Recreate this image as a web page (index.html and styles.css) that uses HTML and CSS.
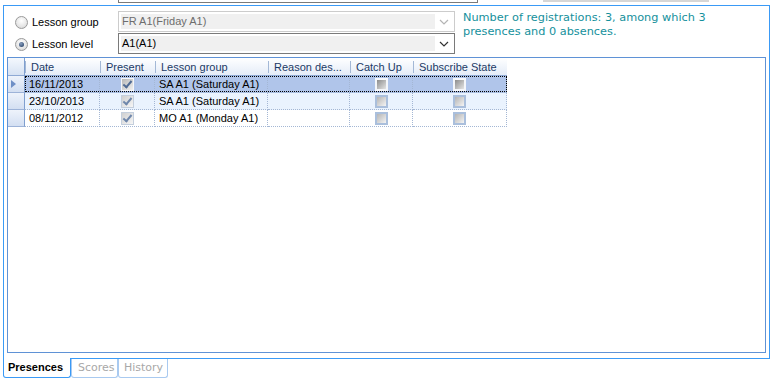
FILE: index.html
```html
<!DOCTYPE html>
<html>
<head>
<meta charset="utf-8">
<link rel="stylesheet" href="styles.css">
</head>
<body>
<div class="topstrip">
  <div class="stub-combo"></div>
  <div class="stub-bar"></div>
</div>
<div class="panel">
  <div class="filter">
    <label class="opt"><span class="radio"></span>Lesson group</label>
    <div class="combo disabled"><span class="field">FR A1(Friday A1)</span><span class="arrow"><svg width="10" height="6" viewBox="0 0 10 6"><path d="M1 1 L5 5 L9 1" fill="none" stroke="#b4b4b4" stroke-width="1.2"/></svg></span></div>
    <div class="info">Number of registrations: 3, among which 3<br>presences and 0 absences.</div>
    <label class="opt"><span class="radio on"></span>Lesson level</label>
    <div class="combo"><span class="field">A1(A1)</span><span class="arrow"><svg width="10" height="6" viewBox="0 0 10 6"><path d="M1 1 L5 5 L9 1" fill="none" stroke="#333" stroke-width="1.2"/></svg></span></div>
  </div>
  <div class="gridframe">
    <div class="grid">
      <div class="row head">
        <div class="rh"></div>
        <div class="hc c1">Date</div>
        <div class="hc c2">Present</div>
        <div class="hc c3">Lesson group</div>
        <div class="hc c4">Reason des...</div>
        <div class="hc c5">Catch Up</div>
        <div class="hc c6">Subscribe State</div>
      </div>
      <div class="row sel">
        <div class="rh"><svg width="5" height="8" viewBox="0 0 5 8"><path d="M0 0 L5 4 L0 8 Z" fill="#6e8fc6"/></svg></div>
        <div class="cells focus">
          <div class="c c1">16/11/2013</div>
          <div class="c c2 mid"><span class="chk on"></span></div>
          <div class="c c3">SA A1 (Saturday A1)</div>
          <div class="c c4"></div>
          <div class="c c5 mid"><span class="chk"></span></div>
          <div class="c c6 mid"><span class="chk"></span></div>
        </div>
      </div>
      <div class="row alt">
        <div class="rh"></div>
        <div class="cells">
          <div class="c c1">23/10/2013</div>
          <div class="c c2 mid"><span class="chk on"></span></div>
          <div class="c c3">SA A1 (Saturday A1)</div>
          <div class="c c4"></div>
          <div class="c c5 mid"><span class="chk"></span></div>
          <div class="c c6 mid"><span class="chk"></span></div>
        </div>
      </div>
      <div class="row">
        <div class="rh"></div>
        <div class="cells">
          <div class="c c1">08/11/2012</div>
          <div class="c c2 mid"><span class="chk on"></span></div>
          <div class="c c3">MO A1 (Monday A1)</div>
          <div class="c c4"></div>
          <div class="c c5 mid"><span class="chk"></span></div>
          <div class="c c6 mid"><span class="chk"></span></div>
        </div>
      </div>
    </div>
  </div>
</div>
<div class="tabs">
  <div class="tab active">Presences</div>
  <div class="tab">Scores</div>
  <div class="tab">History</div>
</div>
</body>
</html>
```
FILE: styles.css
```css
html, body {
  margin: 0;
  padding: 0;
  background: #fff;
  overflow: hidden;
}
body {
  width: 773px;
  height: 378px;
  font-family: "Liberation Sans", Arial, sans-serif;
  font-size: 11px;
  color: #000;
}
.topstrip {
  height: 5px;
  display: flex;
  align-items: flex-start;
}
.stub-combo {
  margin-left: 118px;
  width: 360px;
  height: 3px;
  box-sizing: border-box;
  border: 1px solid #7a7a7a;
  border-top: none;
}
.stub-bar {
  margin-left: 65px;
  width: 166px;
  height: 2px;
  background: #d6d6d6;
}
.panel {
  margin-left: 3px;
  width: 767px;
  height: 354px;
  box-sizing: border-box;
  border: 1px solid #3a9af6;
  display: flex;
  flex-direction: column;
  padding: 5px 0 0 0;
}
.filter {
  display: grid;
  grid-template-columns: 114px 337px auto;
  grid-template-rows: 21px 21px;
  row-gap: 1px;
}
.opt {
  display: flex;
  align-items: center;
  padding-left: 11px;
  gap: 4px;
  color: #000;
  padding-top: 1px;
}
.radio {
  width: 13px;
  height: 13px;
  box-sizing: border-box;
  border-radius: 50%;
  border: 1px solid #9a9a9a;
  background: radial-gradient(circle at 50% 35%, #ffffff 0%, #e6e6e6 60%, #cfcfcf 100%);
  position: relative;
}
.radio.on::after {
  content: "";
  position: absolute;
  left: 3px;
  top: 3px;
  width: 5px;
  height: 5px;
  border-radius: 50%;
  background: radial-gradient(circle at 40% 35%, #8aa0c0 0%, #3b5478 70%, #24385a 100%);
}
.combo {
  display: flex;
  box-sizing: border-box;
  border: 1px solid #7a7a7a;
  padding: 2px 1px 2px 2px;
  background: #fff;
}
.combo.disabled {
  border-color: #cccccc;
}
.combo .field {
  flex: 1;
  background: #f0f0f0;
  line-height: 15px;
  padding-left: 1px;
  color: #000;
}
.combo.disabled .field {
  color: #6d6d6d;
}
.combo .arrow {
  width: 18px;
  display: flex;
  align-items: center;
  justify-content: center;
}
.info {
  grid-column: 3;
  grid-row: 1 / 3;
  margin-left: 8px;
  font-family: "DejaVu Sans", Verdana, sans-serif;
  font-size: 11.3px;
  line-height: 14px;
  color: #14909c;
  padding-top: 0;
  white-space: nowrap;
}
.gridframe {
  margin: 3px 3px 5px 3px;
  flex: 1;
  border: 1px solid #5f92d6;
}
.grid {
  width: 499px;
}
.row {
  display: flex;
  height: 17px;
}
.row.head {
  height: 18px;
}
.rh {
  width: 17px;
  box-sizing: border-box;
  border-right: 1px solid #7f9fcf;
  border-bottom: 1px solid #9db3d8;
  background: linear-gradient(#eef3fb, #d3dff2);
  display: flex;
  align-items: center;
  padding-left: 3px;
}
.head .rh {
  background: linear-gradient(#f4f8fd, #d6e2f3);
  border-bottom: 1px solid #8ea9d4;
}
.hc {
  box-sizing: border-box;
  height: 18px;
  line-height: 18px;
  padding-left: 6px;
  color: #1b3a66;
  background: linear-gradient(#ffffff, #e4ecf8);
  border-bottom: 1px solid #8ea9d4;
  position: relative;
  white-space: nowrap;
  overflow: hidden;
}
.hc::before {
  content: "";
  position: absolute;
  left: 0;
  top: 3px;
  height: 12px;
  width: 1px;
  background: #a3b8d6;
}
.c1 { width: 75px; }
.c2 { width: 55px; }
.c3 { width: 113px; }
.c4 { width: 82px; }
.c5 { width: 63px; }
.c6 { width: 94px; }
.cells {
  display: flex;
}
.cells.focus {
  height: 16px;
  outline: 1px dotted #000;
  outline-offset: -1px;
}
.c {
  box-sizing: border-box;
  height: 17px;
  line-height: 16px;
  padding-left: 4px;
  border-right: 1px dotted #a4b7d4;
  border-bottom: 1px dotted #a4b7d4;
  white-space: nowrap;
  overflow: hidden;
}
.c.mid {
  padding-left: 0;
  display: flex;
  align-items: center;
  justify-content: center;
}
.sel .c { background: #b0c5ea; }
.alt .c { background: #eaf3fe; }
.chk {
  display: block;
  flex: none;
  width: 13px;
  height: 13px;
  box-sizing: border-box;
  border: 2px solid #aabfdc;
  background: linear-gradient(135deg, #b4b4b4, #f4f4f4);
  position: relative;
}
.sel .chk {
  border-color: #f4f6fa;
  background: linear-gradient(135deg, #8c8c8c, #e4e4e4);
}
.chk.on {
  border: 1px solid #c4cfdd;
  background: linear-gradient(135deg, #d0d0d0, #f6f6f6);
}
.sel .chk.on {
  border-color: #f4f6fa;
  background: linear-gradient(135deg, #b8b8b8, #f0f0f0);
}
.chk.on::after {
  content: "";
  position: absolute;
  left: 3px;
  top: 0px;
  width: 3px;
  height: 7px;
  border-right: 2px solid #6f87ab;
  border-bottom: 2px solid #6f87ab;
  transform: rotate(40deg);
}
.sel .chk.on::after {
  border-color: #4f6a94;
}
.tabs {
  display: flex;
  margin-left: 3px;
}
.tab {
  height: 19px;
  box-sizing: border-box;
  border: 1px solid #a9caf0;
  border-top: none;
  border-radius: 0 0 3px 3px;
  font-family: "DejaVu Sans", Verdana, sans-serif;
  font-size: 11px;
  line-height: 18px;
  color: #a8a8a8;
  padding: 0 5px;
  background: #fff;
}
.tab.active {
  margin-top: -1px;
  height: 20px;
  line-height: 19px;
  border-color: #3a9af6;
  color: #000;
  font-weight: bold;
  font-family: "Liberation Sans", Arial, sans-serif;
  width: 68px;
  padding: 0 0 0 4px;
}
.tab:nth-child(2) { width: 47px; padding-left: 6px; }
.tab:nth-child(3) { width: 50px; padding-left: 5px; }
```
